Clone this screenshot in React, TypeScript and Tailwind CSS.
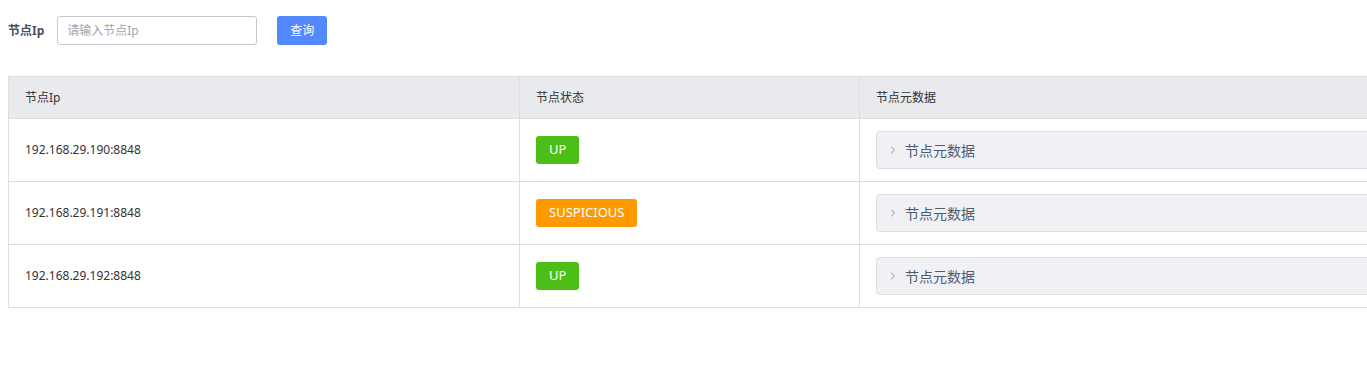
import { ChevronRight } from "lucide-react"

const nodes = [
  { ip: "192.168.29.190:8848", state: "UP" },
  { ip: "192.168.29.191:8848", state: "SUSPICIOUS" },
  { ip: "192.168.29.192:8848", state: "UP" },
]

const font = { fontFamily: '"Noto Sans", "Noto Sans CJK SC", sans-serif' }

const StateTag = ({ state }: { state: string }) => (
  <span
    className={`inline-flex h-[28px] items-center rounded-[3px] px-[13px] text-[13px] text-white ${
      state === "UP" ? "bg-[#4cbe16]" : "bg-[#ff9900]"
    }`}
  >
    {state}
  </span>
)

export default function App() {
  return (
    <div className="h-[379px] w-[1367px] overflow-hidden bg-white" style={font}>
      {/* search bar */}
      <div className="flex items-center px-[8px] pt-[16px]">
        <span className="text-[12px] font-bold text-[#4a4f5c]">节点Ip</span>
        <input
          className="ml-[13px] h-[29px] w-[200px] rounded-[3px] border border-[#c5c8ce] px-[9px] text-[12px] outline-none placeholder:text-[#a0a4ab]"
          placeholder="请输入节点Ip"
        />
        <button className="ml-[20px] h-[29px] w-[50px] rounded-[3px] bg-[#5488ff] text-[12px] text-white">
          查询
        </button>
      </div>

      {/* node table */}
      <div className="ml-[8px] mt-[31px] w-[1420px] border border-[#dcdee2] border-r-0 text-[12px] text-[#333]">
        <div className="flex h-[42px] border-b border-[#dcdee2] bg-[#e9eaee]">
          <div className="flex w-[511px] items-center border-r border-[#dcdee2] pl-[16px]">节点Ip</div>
          <div className="flex w-[340px] items-center border-r border-[#dcdee2] pl-[16px]">节点状态</div>
          <div className="flex flex-1 items-center pl-[16px]">节点元数据</div>
        </div>
        {nodes.map((n, i) => (
          <div
            key={i}
            className={`flex ${i < nodes.length - 1 ? "h-[63px] border-b border-[#dcdee2]" : "h-[62px]"}`}
          >
            <div className="flex w-[511px] items-center border-r border-[#dcdee2] pl-[16px]">{n.ip}</div>
            <div className="flex w-[340px] items-center border-r border-[#dcdee2] pl-[16px]">
              <StateTag state={n.state} />
            </div>
            <div className="flex flex-1 items-center pl-[16px]">
              <div className="flex h-[38px] w-full items-center rounded-[4px] border border-[#dcdee2] bg-[#f0f1f5] pl-[10px] text-[14px] text-[#515a6e]">
                <ChevronRight className="h-[12px] w-[12px] text-[#6f737d]" strokeWidth={1.5} />
                <span className="ml-[6px]">节点元数据</span>
              </div>
            </div>
          </div>
        ))}
      </div>
    </div>
  )
}
